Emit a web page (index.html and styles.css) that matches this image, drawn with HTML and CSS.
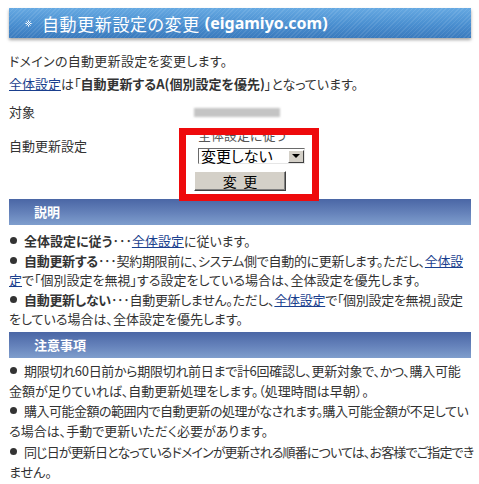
FILE: index.html
```html
<!DOCTYPE html>
<html lang="ja">
<head>
<meta charset="utf-8">
<title>自動更新設定の変更</title>
<link rel="stylesheet" href="styles.css">
</head>
<body>
<div class="page">
  <h1 class="title">
    <svg class="title-icon" width="7" height="7" viewBox="0 0 7 7" aria-hidden="true">
      <g fill="#fff">
        <rect x="3" y="0" width="1" height="1" opacity=".6"/>
        <rect x="1" y="1" width="1" height="1" opacity=".5"/><rect x="3" y="1" width="1" height="1"/><rect x="5" y="1" width="1" height="1" opacity=".5"/>
        <rect x="2" y="2" width="1" height="1"/><rect x="4" y="2" width="1" height="1"/>
        <rect x="0" y="3" width="1" height="1" opacity=".6"/><rect x="1" y="3" width="1" height="1"/><rect x="3" y="3" width="1" height="1"/><rect x="5" y="3" width="1" height="1"/><rect x="6" y="3" width="1" height="1" opacity=".6"/>
        <rect x="2" y="4" width="1" height="1"/><rect x="4" y="4" width="1" height="1"/>
        <rect x="1" y="5" width="1" height="1" opacity=".5"/><rect x="3" y="5" width="1" height="1"/><rect x="5" y="5" width="1" height="1" opacity=".5"/>
        <rect x="3" y="6" width="1" height="1" opacity=".6"/>
      </g>
    </svg>
    <span class="title-jp">自動更新設定の変更</span> <span class="title-en">(eigamiyo.com)</span>
  </h1>

  <p class="intro intro-1">ドメインの自動更新設定を変更します。</p>
  <p class="intro intro-2"><a href="#">全体設定</a>は「<b class="strong">自動更新するA(個別設定を優先)</b>」となっています。</p>

  <div class="form">
    <div class="row row-target">
      <div class="label">対象</div>
      <div class="value"><span class="blurred"></span></div>
    </div>
    <div class="row row-setting">
      <div class="label label-setting">自動更新設定</div>
      <div class="value value-setting">
        <div class="hint">全体設定に従う</div>
        <div class="select">
          <span class="select-text">変更しない</span>
          <span class="select-arrow"><span class="tri"></span></span>
        </div>
        <button class="btn" type="button">変&nbsp;&nbsp;更</button>
      </div>
    </div>
    <div class="highlight"></div>
  </div>

  <h2 class="bar">説明</h2>
  <ul class="list list-1">
    <li><span class="dot"></span><b class="strong">全体設定に従う</b>･･･<a href="#">全体設定</a>に従います。</li>
    <li><span class="ls-a"><span class="dot"></span><b class="strong">自動更新する</b>･･･契約期限前に、システム側で自動的に更新します。ただし、<a href="#">全体設</a></span><br><a href="#">定</a>で「個別設定を無視」する設定をしている場合は、全体設定を優先します。</li>
    <li><span class="ls-a"><span class="dot"></span><b class="strong">自動更新しない</b>･･･自動更新しません。ただし、<a href="#">全体設定</a>で「個別設定を無視」設定</span><br>をしている場合は、全体設定を優先します。</li>
  </ul>

  <h2 class="bar">注意事項</h2>
  <ul class="list list-2">
    <li><span class="ls-a"><span class="dot"></span>期限切れ60日前から期限切れ前日まで計6回確認し、更新対象で、かつ、購入可能</span><br>金額が足りていれば、自動更新処理をします。（処理時間は早朝）。</li>
    <li><span class="ls-b"><span class="dot"></span>購入可能金額の範囲内で自動更新の処理がなされます。購入可能金額が不足してい</span><br>る場合は、手動で更新いただく必要があります。</li>
    <li><span class="ls-c"><span class="dot"></span>同じ日が更新日となっているドメインが更新される順番については、お客様でご指定でき</span><br>ません。</li>
  </ul>
</div>
</body>
</html>
```

FILE: styles.css
```css
html, body {
  margin: 0;
  padding: 0;
  background: #fff;
}
body {
  font-family: "Noto Sans CJK JP", "Noto Sans", sans-serif;
  font-size: 13px;
  color: #333;
  font-feature-settings: "palt";
}
.page {
  padding: 0 8px 0 9px;
  overflow: hidden;
  height: 484px;
}
.title {
  margin: 8px 0 0;
  height: 30px;
  display: flex;
  align-items: center;
  padding-left: 16px;
  color: #fff;
  font-weight: normal;
  font-size: 17px;
  background:
    repeating-linear-gradient(135deg, rgba(255,255,255,0.09) 0 1px, rgba(255,255,255,0) 1px 3px),
    linear-gradient(#66a9e2, #4a8fd0 55%, #3a7abd);
  box-shadow: 0 2px 3px rgba(0,0,0,0.35);
  white-space: nowrap;
}
.title-icon {
  margin-right: 10px;
  flex: none;
}
.title-jp {
  letter-spacing: 0.6px;
}
.title-en {
  font-family: "Noto Sans", sans-serif;
  font-weight: bold;
  font-size: 16px;
  margin-left: 5px;
}
.intro {
  margin: 0;
  line-height: 22px;
}
.intro-1 {
  margin-top: 12px;
  letter-spacing: 0.3px;
}
.intro-2 {
  margin-top: 1px;
}
a {
  color: #1a3f8e;
  text-decoration: underline;
}
.strong {
  font-weight: bold;
  color: #333;
}
.form {
  position: relative;
}
.row {
  display: flex;
}
.label {
  width: 185px;
  flex: none;
  line-height: 20px;
}
.row-target {
  padding-top: 7px;
  height: 20px;
}
.row-target .value {
  display: flex;
  align-items: center;
}
.blurred {
  display: block;
  width: 86px;
  height: 9px;
  background: #c4c4c4;
  filter: blur(1px);
  margin-top: 1px;
}
.row-setting {
  padding-top: 6px;
}
.label-setting {
  padding-top: 8px;
}
.value-setting {
  display: flex;
  flex-direction: column;
  align-items: flex-start;
}
.hint {
  margin-left: 4px;
  font-size: 13px;
  line-height: 14px;
  color: #555;
  height: 14px;
}
.select {
  margin: 6px 0 0 4px;
  width: 107px;
  height: 16px;
  box-sizing: border-box;
  border-top: 1px solid #6a6a6a;
  border-left: 1px solid #6a6a6a;
  border-bottom: 1px solid #e6e6e6;
  border-right: 1px solid #e6e6e6;
  background: #fff;
  display: flex;
  align-items: center;
  justify-content: space-between;
  color: #000;
}
.select-text {
  font-size: 15px;
  line-height: 14px;
  padding-left: 2px;
}
.select-arrow {
  width: 16px;
  height: 13px;
  margin-right: 0;
  box-sizing: border-box;
  background: #d4d0c8;
  border-top: 1px solid #fff;
  border-left: 1px solid #fff;
  border-right: 1px solid #404040;
  border-bottom: 1px solid #404040;
  display: flex;
  align-items: center;
  justify-content: center;
}
.tri {
  width: 0;
  height: 0;
  border-left: 4px solid transparent;
  border-right: 4px solid transparent;
  border-top: 4px solid #000;
}
.btn {
  margin-top: 7px;
  width: 92px;
  height: 20px;
  padding: 0;
  box-sizing: border-box;
  background: #d4d0c8;
  border-top: 1px solid #fff;
  border-left: 1px solid #fff;
  border-right: 1px solid #404040;
  border-bottom: 1px solid #404040;
  box-shadow: inset -1px -1px 0 #808080;
  font-family: "Noto Sans CJK JP", sans-serif;
  font-size: 14px;
  line-height: 17px;
  color: #000;
}
.highlight {
  position: absolute;
  left: 170px;
  top: 33px;
  width: 126px;
  height: 59px;
  border: 7px solid #ee0a0c;
  pointer-events: none;
}
.bar {
  margin: 8px 0 0;
  height: 26px;
  line-height: 26px;
  padding-left: 25px;
  font-size: 13px;
  font-weight: bold;
  color: #fff;
  background: linear-gradient(#4a66a5, #6683bb 55%, #7f9ecd);
}
.list {
  list-style: none;
  margin: 0;
  padding: 0;
  line-height: 19.5px;
}
.list li {
  white-space: nowrap;
}
.list-1 {
  padding-top: 6px;
  padding-bottom: 3px;
}
.list + .bar {
  margin-top: 0;
}
.list-2 {
  padding-top: 3px;
  line-height: 20.3px;
}
.ls-a {
  letter-spacing: -0.3px;
}
.ls-b {
  letter-spacing: -0.5px;
}
.ls-c {
  letter-spacing: -0.85px;
}
.dot {
  display: inline-block;
  width: 7px;
  height: 7px;
  border-radius: 50%;
  background: #333;
  margin: 0 7px 0 1px;
  vertical-align: 2px;
}
```
